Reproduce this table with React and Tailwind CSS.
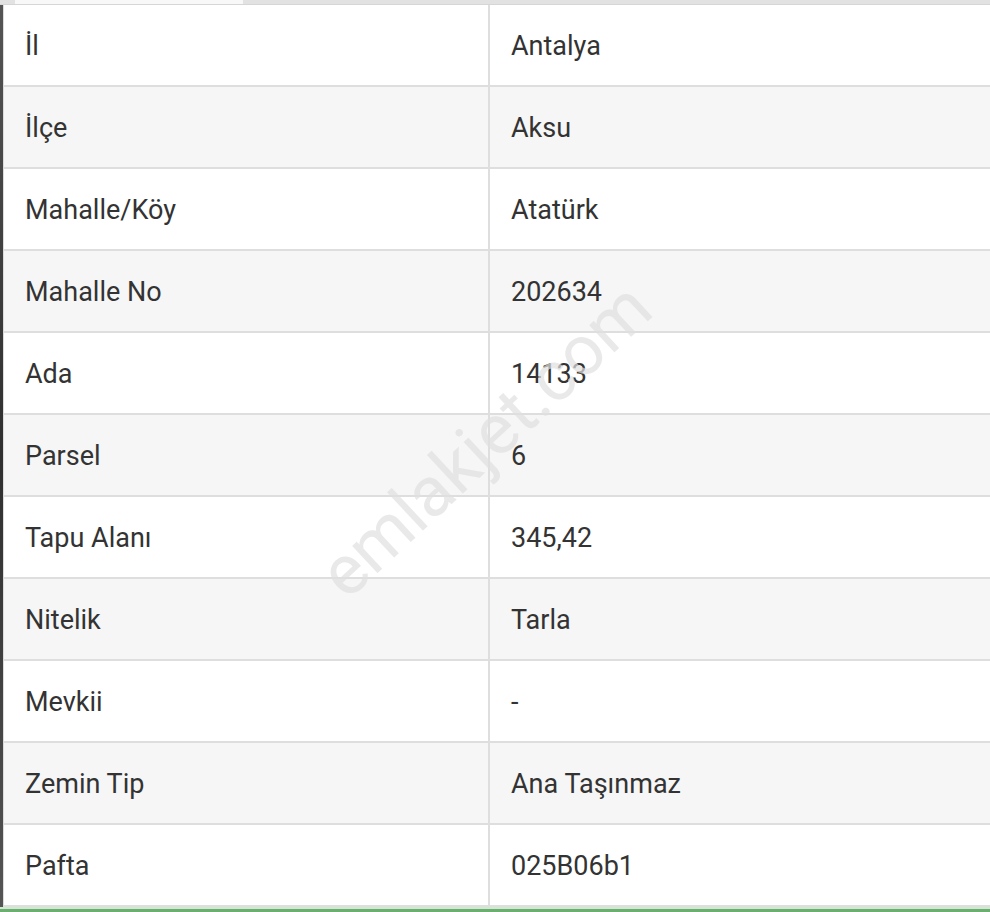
import React from 'react';

const rows = [
  ['İl', 'Antalya'],
  ['İlçe', 'Aksu'],
  ['Mahalle/Köy', 'Atatürk'],
  ['Mahalle No', '202634'],
  ['Ada', '14133'],
  ['Parsel', '6'],
  ['Tapu Alanı', '345,42'],
  ['Nitelik', 'Tarla'],
  ['Mevkii', '-'],
  ['Zemin Tip', 'Ana Taşınmaz'],
  ['Pafta', '025B06b1'],
];

export default function App() {
  return (
    <div className="relative w-[990px] h-[912px] overflow-hidden bg-white font-['Roboto',sans-serif] text-[#333]">
      {/* top tab strip */}
      <div className="flex h-[5px] bg-[#e2e2e2] border-b border-[#d6d6d6]">
        <div className="w-[15px]" />
        <div className="w-[228px] bg-[#f8f8f8]" />
      </div>

      <div className="flex">
        {/* dark left edge */}
        <div className="w-[3px] bg-gradient-to-b from-[#555] via-[#2f2f2f] to-[#555]" />
        <div className="flex-1 border-l border-[#dcdcdc]">
          {rows.map(([label, value], i) => (
            <div
              key={label}
              className={`flex h-[82px] border-b-2 border-[#dedede] ${i % 2 === 1 ? 'bg-[#f6f6f6]' : 'bg-white'}`}
            >
              <div className="w-[486px] border-r-2 border-[#dedede] flex items-center pl-[21px] pt-[3px] text-[27px] leading-none">
                {label}
              </div>
              <div className="flex-1 flex items-center pl-[21px] pt-[3px] text-[27px] leading-none">
                {value}
              </div>
            </div>
          ))}
        </div>
      </div>

      {/* bottom green line */}
      <div className="absolute left-0 right-0 bottom-0 h-[5px] bg-[#6bae6f] border-t-2 border-[#cfe8cf]" />

      {/* watermark */}
      <div className="pointer-events-none absolute left-[485px] top-[440px] -translate-x-1/2 -translate-y-1/2 -rotate-[43deg] text-[70px] leading-none text-[#e0e0e0] opacity-70 whitespace-nowrap">
        emlakjet.com
      </div>
    </div>
  );
}
